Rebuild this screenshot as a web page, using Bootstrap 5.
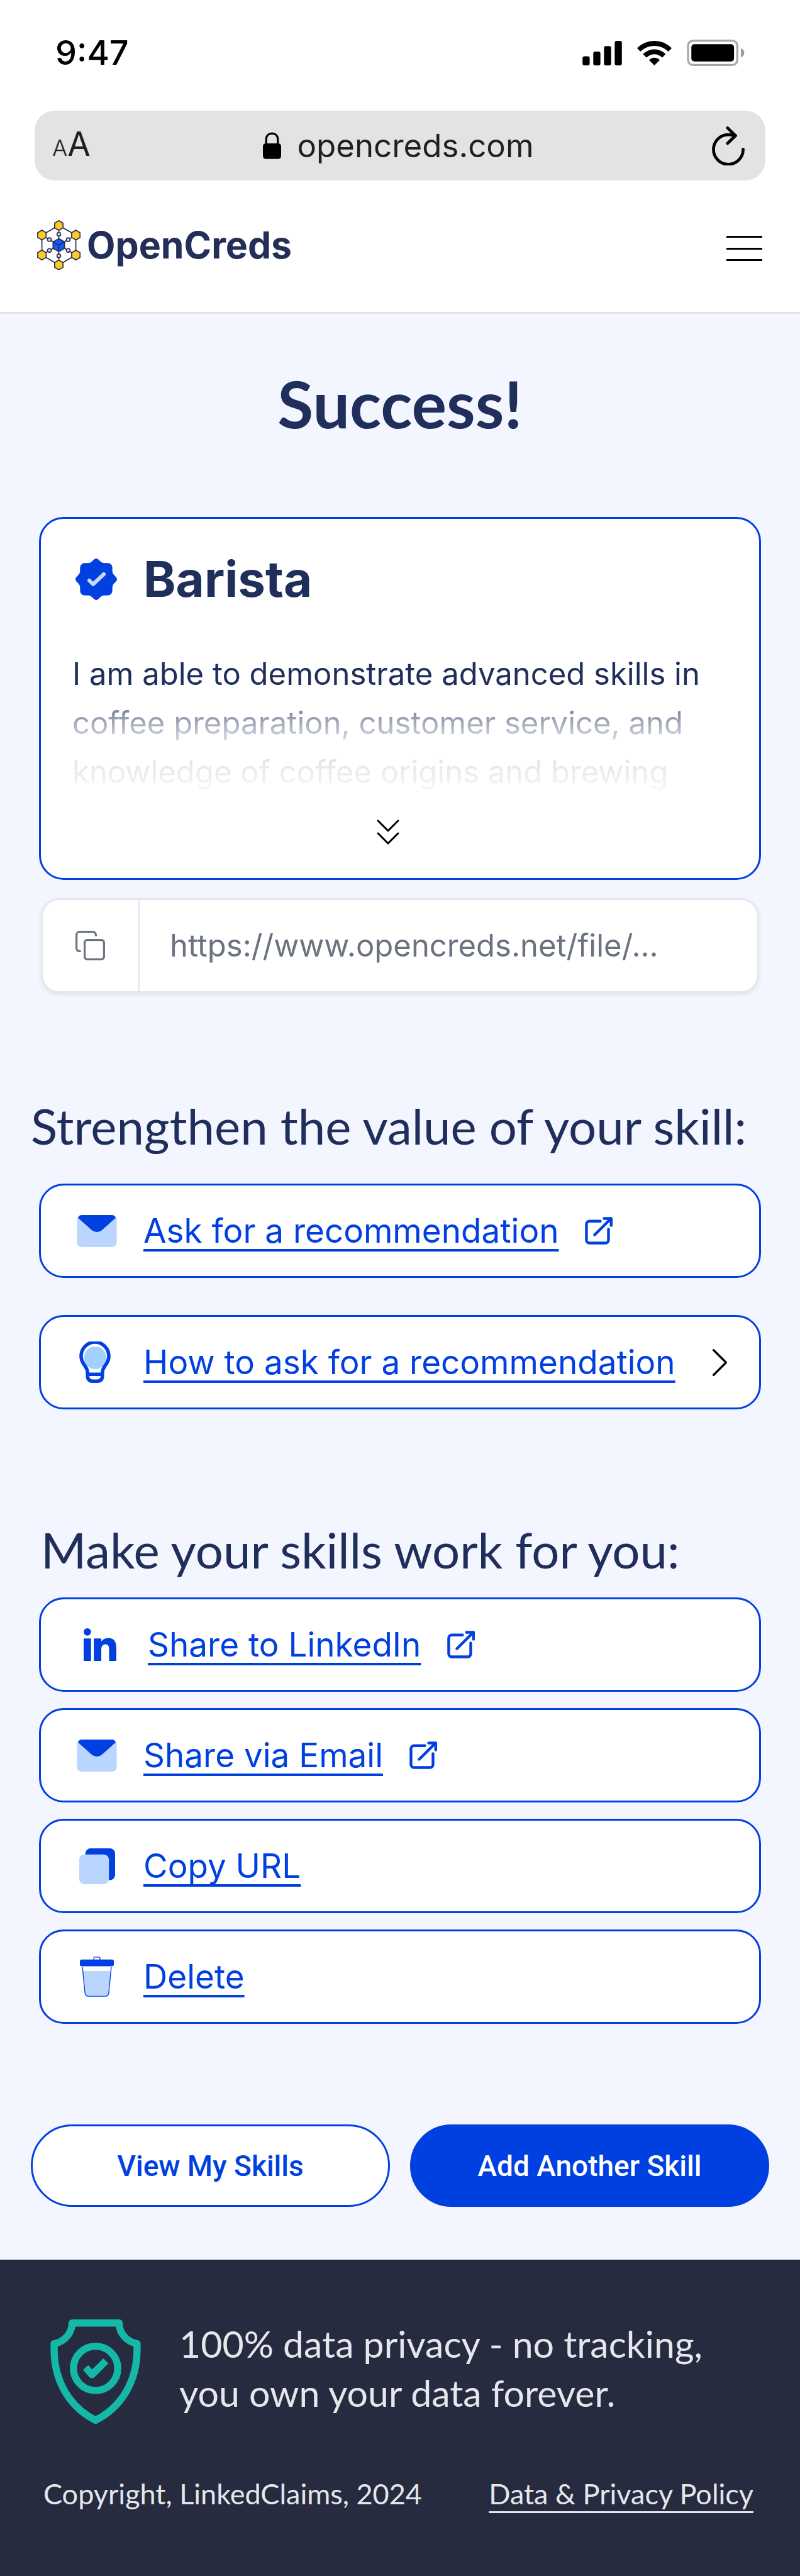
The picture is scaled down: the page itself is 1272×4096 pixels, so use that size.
<!DOCTYPE html>
<html lang="en">
<head>
<meta charset="utf-8">
<meta name="viewport" content="width=device-width, initial-scale=1">
<title>OpenCreds - Success</title>
<link href="https://cdn.jsdelivr.net/npm/bootstrap@5.3.0/dist/css/bootstrap.min.css" rel="stylesheet">
<style>
  :root { --oc-blue: #003fe0; --oc-navy: #202e5b; --oc-pale: #f3f6ff; --oc-line: #e3e3e3; }
  body { font-family: Inter, "Liberation Sans", sans-serif; color: var(--oc-navy); background: #fff; }
  svg { display: block; flex: none; }
  .status { padding: 44px 88px 1px; color: #000; }
  .clock { font-size: 54px; line-height: 80px; font-weight: 500; }
  .status-icons { gap: 24px; height: 80px; }
  .address { margin: 51px 55px 0; height: 111px; padding: 0 33px 0 28px; border-radius: 32px; background: var(--oc-line); color: #1f2024; font-size: 51px; line-height: 80px; }
  .address .side { flex: 1 1 0; }
  .plain { background: none; border: 0; padding: 0; color: inherit; }
  .reader-small { font-size: 36px; font-weight: 300; }
  .reader-big { font-size: 53px; }
  .host { gap: 25px; }
  .topnav { padding: 63px 60px 67px 59px; border-bottom: 3px solid var(--oc-line); }
  .brand { gap: 10px; font-size: 59px; line-height: 79px; font-weight: 700; color: #232f58; text-decoration: none; }
  .page { background: var(--oc-pale); padding: 79px 62px 84px; }
  .page-title { font-family: Lato, sans-serif; font-size: 104px; line-height: 125px; font-weight: 700; margin: 0 0 119px; }
  .panel { border: 3px solid var(--oc-blue); border-radius: 39px; background: #fff; }
  .skill { padding: 49px 50px 34px; }
  .skill-head { gap: 42px; padding-left: 5px; margin-bottom: 65px; }
  .skill-name { font-size: 78px; line-height: 94px; font-weight: 700; margin: 0; }
  .skill-text { font-size: 49px; line-height: 78px; margin: 0 0 17px;
    -webkit-mask-image: linear-gradient(#000 70px, rgba(0,0,0,.56) 98px, rgba(0,0,0,.26) 134px, rgba(0,0,0,.13) 175px, rgba(0,0,0,.06) 212px, transparent 240px);
    mask-image: linear-gradient(#000 70px, rgba(0,0,0,.56) 98px, rgba(0,0,0,.26) 134px, rgba(0,0,0,.13) 175px, rgba(0,0,0,.06) 212px, transparent 240px); }
  .expand { padding-right: 38px; color: #000; }
  .share-url { margin: 29px 3px 0; height: 151px; border: 3px solid #e5e7eb; border-radius: 29px; background: #fff; box-shadow: 0 3px 6px rgba(0,0,0,.08); color: #6b7280; overflow: hidden; }
  .share-url .plain { width: 154px; padding-left: 52px; border-right: 3px solid #e5e7eb; }
  .share-url input { font-size: 49px; line-height: 78px; color: #6b7280; padding: 0 0 0 48px; border: 0; background: none; min-width: 0; outline: 0; }
  .section-title { font-family: Lato, sans-serif; font-size: 78px; line-height: 94px; font-weight: 400; margin: 0; white-space: nowrap; }
  .strengthen { margin: 164px -13px 0; }
  .stack-wide { gap: 59px; margin-top: 45px; }
  .make { margin-top: 176px; padding-left: 3px; }
  .stack-tight { gap: 26px; margin-top: 29px; }
  .action { height: 150px; padding: 0 51px 0 57px; gap: 42px; font-size: 53px; line-height: 78px; color: var(--oc-blue); text-decoration: none; }
  .action .caption { white-space: nowrap; text-decoration: underline; text-decoration-thickness: 4px; text-underline-offset: 10px; text-decoration-skip-ink: none; }
  .slot { width: 64px; flex: none; }
  .slot-wide { width: 71px; }
  .cta { margin: 160px -13px 0; gap: 32px; }
  .cta .btn { height: 131px; border: 3px solid var(--oc-blue); font-family: Roboto, sans-serif; font-size: 46px; line-height: 66px; font-weight: 500; flex: 1 1 0; }
  .btn-view { background: #fff; color: var(--oc-blue); }
  .btn-add { background: var(--oc-blue); color: #fff; }
  .foot { background: #262b40; color: #e5e7eb; font-family: Lato, sans-serif; padding: 95px 74px 100px 69px; }
  .promise { gap: 61px; padding-left: 11px; font-size: 59px; line-height: 78px; }
  .legal { margin-top: 80px; font-size: 45px; line-height: 62px; }
  .legal a { color: inherit; text-decoration-thickness: 3px; text-underline-offset: 11px; text-decoration-skip-ink: none; }
</style>
</head>
<body>
<svg width="0" height="0" class="position-absolute" aria-hidden="true">
  <defs>
    <symbol id="i-ext" viewBox="0 0 54 54"><g fill="none" stroke="#003fe0" stroke-width="5.4" stroke-linecap="round" stroke-linejoin="round"><path d="M30 8.3H9a6 6 0 0 0-6 6V45a6 6 0 0 0 6 6h31a6 6 0 0 0 6-6V24"/><path d="M19 35 51 3M37.500 3H51.300V16.500"/></g></symbol>
    <symbol id="i-mail" viewBox="0 0 78 63"><rect width="78" height="63" rx="9" fill="#bad6ff"/><path d="M2 5.500Q4 0 10 0H68Q74 0 76 5.500L49 29.500Q39 37.500 29 29.500Z" fill="#003fe0"/></symbol>
    <path id="hexa" d="M0-9.500 8.200-4.700V4.700L0 9.500-8.200 4.700V-4.700Z"/>
  </defs>
</svg>

<div class="status d-flex justify-content-between align-items-start">
  <span class="clock">9:47</span>
  <div class="status-icons d-flex align-items-center">
    <svg width="63" height="39" viewBox="36 30 77 48"><rect x="36" y="60" width="14" height="18" rx="4"/><rect x="57" y="51" width="14" height="27" rx="4"/><rect x="78" y="40" width="14" height="38" rx="4"/><rect x="99" y="30" width="14" height="48" rx="4"/></svg>
    <svg width="55" height="39" viewBox="141 30 68 48"><path d="M141 44C160 25.300 190 25.300 209 44L202.500 51C187 36 163 36 147.500 51Z"/><path d="M152.500 56C165 43.500 185 43.500 197 56L190.500 62.500C181 54 169 54 159.500 62.500Z"/><path d="M164.500 67.500C171 61.500 179 61.500 185.500 67.500L175 78Z"/></svg>
    <svg width="92" height="42" viewBox="239 28 113 52"><rect x="241" y="30" width="97" height="48" rx="10" fill="none" stroke="#a6a6a6" stroke-width="4"/><rect x="247.500" y="37" width="84" height="34" rx="6"/><path d="M345 45C354 48 354 60 345 63Z" fill="#9a9a9a"/></svg>
  </div>
</div>

<div class="address d-flex align-items-center">
  <div class="side"><button class="plain d-flex align-items-baseline" aria-label="Text size"><span class="reader-small">A</span><span class="reader-big">A</span></button></div>
  <div class="host d-flex align-items-center">
    <svg width="29" height="43" viewBox="0 0 36 53"><path d="M6.500 26V14C6.500-1.500 29.500-1.500 29.500 14V26" fill="none" stroke="#000" stroke-width="4"/><rect y="22" width="36" height="31" rx="6"/></svg>
    <span>opencreds.com</span>
  </div>
  <div class="side d-flex justify-content-end"><button class="plain" aria-label="Reload"><svg width="52" height="62" viewBox="0 0 64 76"><g fill="none" stroke="#000" stroke-width="5.800" stroke-linecap="round" stroke-linejoin="round"><path d="M61 44.500A29 29 0 1 1 32 16Q40 16 46 18"/><path d="M30.500 2.800 46 18 30.500 33"/></g></svg></button></div>
</div>

<nav class="topnav d-flex justify-content-between align-items-center">
  <a class="brand d-flex align-items-center" href="#">
    <svg width="69" height="79" viewBox="22 19.500 84 97">
      <g stroke="#252c44" stroke-width="2" fill="none">
        <path d="M64 30 97.300 48.700V87.700L64 107 31 87.700V48.700ZM64 30V107M31 48.700 97.300 87.700M97.300 48.700 31 87.700"/>
        <g fill="#ffc926"><use href="#hexa" x="64" y="30"/><use href="#hexa" x="97.300" y="48.700"/><use href="#hexa" x="97.300" y="87.700"/><use href="#hexa" x="64" y="107"/><use href="#hexa" x="31" y="87.700"/><use href="#hexa" x="31" y="48.700"/></g>
        <g fill="#cfe3ff"><circle cx="64" cy="47" r="3.600"/><circle cx="82.300" cy="57.700" r="3.600"/><circle cx="82.300" cy="78.700" r="3.600"/><circle cx="64" cy="89.300" r="3.600"/><circle cx="45.700" cy="78.700" r="3.600"/><circle cx="45.700" cy="57.700" r="3.600"/></g>
        <path d="M64 55.500 75.300 62V74.500L64 81 52.700 74.500V62Z" fill="#1557ff"/><path d="M52.700 62 64 68.500 75.300 62M64 68.500V81"/>
      </g>
    </svg>
    <span>OpenCreds</span>
  </a>
  <button class="plain" aria-label="Menu"><svg width="57" height="50" viewBox="0 0 57 50"><path d="M0 11.500H57M0 30.500H57M0 48.500H57" stroke="#000" stroke-width="3"/></svg></button>
</nav>

<main class="page">
  <h1 class="page-title text-center">Success!</h1>

  <section class="panel skill">
    <div class="skill-head d-flex align-items-center">
      <svg width="66" height="66" viewBox="-33 -33 66 66"><path fill="#003fe0" d="M0-33C4-33 6-27 11-26C16-25 20-27 23.500-23.500C27-20 25-16 26-11C27-6 33-4 33 0C33 4 27 6 26 11C25 16 27 20 23.500 23.500C20 27 16 25 11 26C6 27 4 33 0 33C-4 33-6 27-11 26C-16 25-20 27-23.500 23.500C-27 20-25 16-26 11C-27 6-33 4-33 0C-33-4-27-6-26-11C-25-16-27-20-23.500-23.500C-20-27-16-25-11-26C-6-27-4-33 0-33Z"/><path d="M-11 2-5 8 12-8" fill="none" stroke="#c4dcff" stroke-width="6" stroke-linecap="round" stroke-linejoin="round"/></svg>
      <h2 class="skill-name">Barista</h2>
    </div>
    <p class="skill-text">I am able to demonstrate advanced skills in coffee preparation, customer service, and knowledge of coffee origins and brewing</p>
    <div class="expand d-flex justify-content-center"><button class="plain" aria-label="Show more"><svg width="78" height="78" viewBox="0 0 78 78"><path d="M23 21 39 37 55 21M23 41 39 57 55 41" fill="none" stroke="#000" stroke-width="3" stroke-linecap="round" stroke-linejoin="round"/></svg></button></div>
  </section>

  <div class="share-url d-flex align-items-stretch">
    <button class="plain d-flex align-items-center" aria-label="Copy link"><svg width="47" height="47" viewBox="0 0 58 58"><g fill="none" stroke="#6b7280" stroke-width="4" stroke-linecap="round"><path d="M9 40H8a6 6 0 0 1-6-6V8a6 6 0 0 1 6-6H34a6 6 0 0 1 6 6v1"/><rect x="18" y="18" width="38" height="38" rx="5"/></g></svg></button>
    <input class="flex-grow-1" type="text" aria-label="Skill link" value="https://www.opencreds.net/file/..." readonly>
  </div>

  <h2 class="section-title strengthen">Strengthen the value of your skill:</h2>
  <div class="stack-wide d-flex flex-column">
    <a class="panel action d-flex align-items-center" href="#"><span class="slot d-flex justify-content-center"><svg width="64" height="51"><use href="#i-mail"/></svg></span><span class="caption">Ask for a recommendation</span><svg width="44" height="44"><use href="#i-ext"/></svg></a>
    <a class="panel action d-flex align-items-center" href="#"><span class="slot ps-1"><svg width="50" height="66" viewBox="0 0 61 81"><circle cx="31" cy="32" r="22" fill="#a3d0ff"/><path d="M16 60C16 54 12 49 8.500 44A27 27 0 1 1 52.500 44C49 49 45 54 45 60V67Q45 77.500 35 77.500H26Q16 77.500 16 67ZM16 64H45" fill="none" stroke="#003fe0" stroke-width="6.800"/></svg></span><span class="caption">How to ask for a recommendation</span><svg class="ms-auto" width="23" height="43" viewBox="0 0 28 52"><path d="M2 2 26 26 2 50" fill="none" stroke="#000" stroke-width="4" stroke-linecap="round" stroke-linejoin="round"/></svg></a>
  </div>

  <h2 class="section-title make">Make your skills work for you:</h2>
  <div class="stack-tight d-flex flex-column">
    <a class="panel action d-flex align-items-center" href="#"><span class="slot slot-wide d-flex justify-content-end pe-2"><svg width="52" height="52" viewBox="0 0 64 64" fill="#003fe0"><circle cx="7.200" cy="7.200" r="7.200"/><path d="M0 20H14.400V64H0ZM20 20H34.500V26C37 22 42 19 48 19 60 19 64 27 64 39V64H49.800V42C49.800 36 48.500 31.500 43 31.500 37 31.500 34.500 36 34.500 42V64H20Z"/></svg></span><span class="caption">Share to LinkedIn</span><svg width="44" height="44"><use href="#i-ext"/></svg></a>
    <a class="panel action d-flex align-items-center" href="#"><span class="slot d-flex justify-content-center"><svg width="64" height="51"><use href="#i-mail"/></svg></span><span class="caption">Share via Email</span><svg width="44" height="44"><use href="#i-ext"/></svg></a>
    <a class="panel action d-flex align-items-center" href="#"><span class="slot d-flex justify-content-center"><svg width="57" height="57" viewBox="0 0 70 70"><rect x="12" width="58" height="62" rx="10" fill="#003fe0"/><rect y="12" width="58" height="58" rx="10" fill="#bad6ff"/></svg></span><span class="caption">Copy URL</span></a>
    <a class="panel action d-flex align-items-center" href="#"><span class="slot d-flex justify-content-center"><svg width="54" height="64" viewBox="0 0 66 78"><path d="M7 28H59L55 73Q54 76 51 76H15Q12 76 11 73Z" fill="#bad6ff"/><path d="M5 20.500 10 71Q11 77 16 77H50Q55 77 56 71L61 20.500M27 7V3Q27 1 29 1H37Q39 1 39 3V7" fill="none" stroke="#003fe0" stroke-width="1.700"/><rect y="5.700" width="66" height="13" rx="3.500" fill="#003fe0"/></svg></span><span class="caption">Delete</span></a>
  </div>

  <div class="cta d-flex">
    <button class="btn btn-view rounded-pill">View My Skills</button>
    <button class="btn btn-add rounded-pill">Add Another Skill</button>
  </div>
</main>

<footer class="foot">
  <div class="promise d-flex align-items-start">
    <svg width="144" height="166" viewBox="28 44 176 204"><g fill="none" stroke="#15b8a6" stroke-width="14" stroke-linejoin="round"><path d="M70 51H162C162 72 178 88 197 91.500V103C197 163 168 215 116 241 64 215 35 163 35 103V91.500C54 88 70 72 70 51Z"/><circle cx="116" cy="139.700" r="43.300"/><path d="M96.500 138 109 152 136 125"/></g></svg>
    <span>100% data privacy - no tracking,<br>you own your data forever.</span>
  </div>
  <div class="legal d-flex justify-content-between">
    <span>Copyright, LinkedClaims, 2024</span>
    <a href="#">Data &amp; Privacy Policy</a>
  </div>
</footer>
<script src="https://cdn.jsdelivr.net/npm/bootstrap@5.3.0/dist/js/bootstrap.bundle.min.js"></script>
</body>
</html>
